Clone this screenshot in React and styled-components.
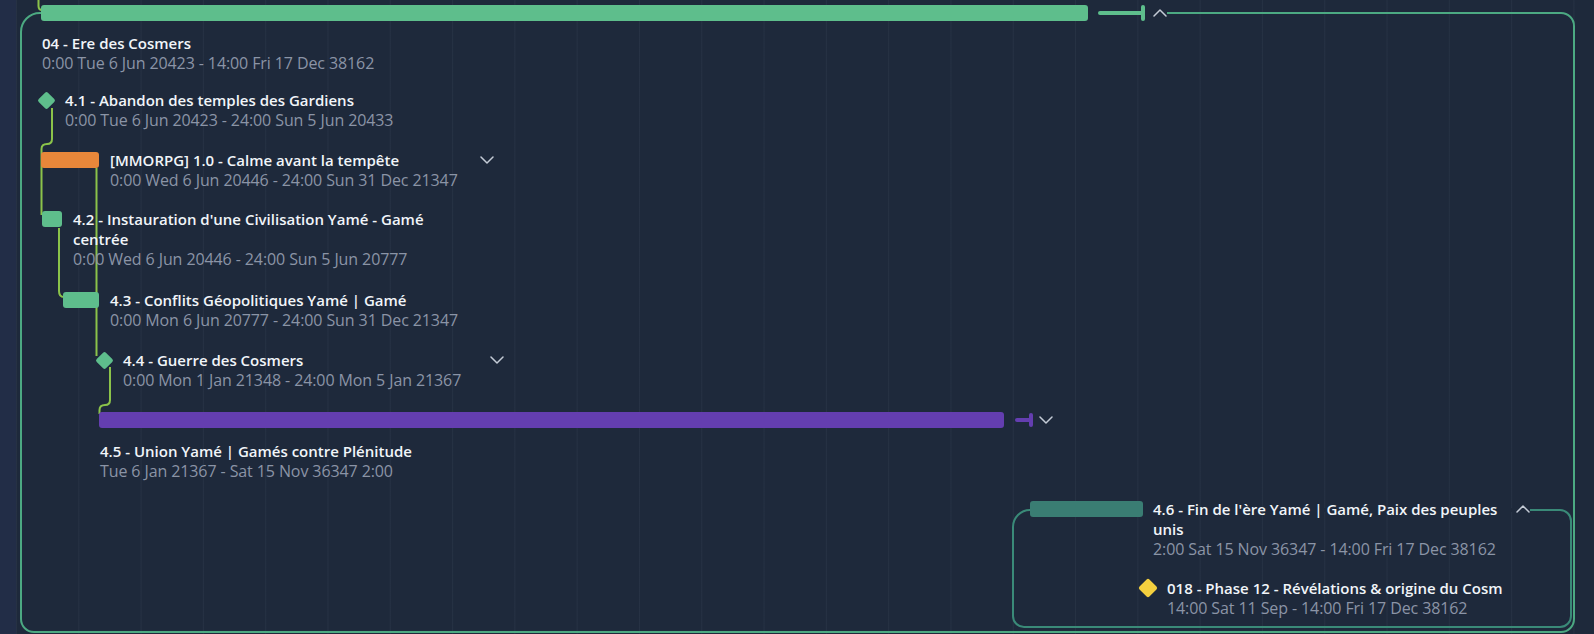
import React from "react";
import styled, { createGlobalStyle } from "styled-components";

const BG = "#1e293b";
const GREEN = "#5ebe8c";
const LIME = "#8bc34a";

const GlobalStyle = createGlobalStyle`
  html, body {
    margin: 0;
    padding: 0;
    background: ${BG};
  }
  body {
    font-family: "Open Sans", "Noto Sans", sans-serif;
    -webkit-font-smoothing: antialiased;
  }
`;

const Page = styled.div`
  position: relative;
  box-sizing: border-box;
  width: 1594px;
  height: 634px;
  overflow: hidden;
  padding-top: 12px;
  background-color: ${BG};
  background-image: linear-gradient(to right, rgba(148, 163, 184, 0.07) 1px, transparent 1px),
    linear-gradient(to right, #222d47 16px, transparent 16px);
  background-size: 62.3px 100%, 100% 100%;
  background-position: 16px 0, 0 0;
  background-repeat: repeat-x, no-repeat;
`;

const Links = styled.svg`
  position: absolute;
  left: 0;
  top: 0;
  pointer-events: none;
`;

const Group = styled.div`
  position: relative;
  box-sizing: border-box;
  width: ${(p) => p.$w}px;
  margin: ${(p) => p.$mt}px 0 ${(p) => p.$mb}px ${(p) => p.$ml}px;
  padding-bottom: ${(p) => p.$pb}px;
  border: 2px solid ${(p) => p.$color};
  border-radius: ${(p) => p.$r}px ${(p) => p.$r2}px ${(p) => p.$r2}px ${(p) => p.$r2}px;
`;

// header row of a group: sits on the group's top border and hides it up to the chevron
const Head = styled.div`
  position: relative;
  z-index: 0;
  display: flex;
  align-items: ${(p) => (p.$top ? "flex-start" : "center")};
  width: fit-content;
  margin: ${(p) => p.$mt}px 0 0 ${(p) => p.$ml}px;

  &::before {
    content: "";
    position: absolute;
    z-index: -1;
    left: 0;
    right: 0;
    top: ${(p) => p.$cut}px;
    height: 4px;
    background: ${BG};
  }
`;

const Row = styled.div`
  display: flex;
  align-items: ${(p) => (p.$center ? "center" : "flex-start")};
  margin: ${(p) => p.$mt}px 0 0 ${(p) => p.$ml}px;
`;

const Slot = styled.div`
  flex: none;
  display: flex;
  align-items: center;
  justify-content: center;
  width: ${(p) => (p.$w ? `${p.$w}px` : "auto")};
  height: 20px;
`;

const Bar = styled.div`
  flex: none;
  width: ${(p) => p.$w}px;
  height: 16px;
  border-radius: 3px;
  background: ${(p) => p.$color};
`;

const Diamond = styled.div`
  width: ${(p) => p.$size}px;
  height: ${(p) => p.$size}px;
  border-radius: 2px;
  transform: rotate(45deg);
  background: ${(p) => p.$color};
`;

const Deadline = styled.div`
  flex: none;
  display: flex;
  align-items: center;
  margin-left: ${(p) => p.$gap}px;

  &::before {
    content: "";
    width: ${(p) => p.$len}px;
    height: 4px;
    border-radius: 2px 0 0 2px;
    background: ${(p) => p.$color};
  }
  &::after {
    content: "";
    width: 4px;
    height: ${(p) => p.$cap}px;
    border-radius: 2px;
    background: ${(p) => p.$color};
  }
`;

const Label = styled.div`
  flex: none;
  display: flex;
  flex-direction: column;
  width: ${(p) => (p.$w ? `${p.$w}px` : "auto")};
  margin-left: ${(p) => p.$gap || 0}px;
`;

const Title = styled.div`
  font-size: 15px;
  line-height: 20px;
  font-weight: 600;
  color: #f1f5f9;
  white-space: ${(p) => (p.$single ? "nowrap" : "normal")};
`;

const When = styled.div`
  font-size: 16px;
  line-height: 20px;
  letter-spacing: -0.1px;
  color: #8b94a6;
  white-space: nowrap;
`;

const Caret = styled.svg`
  flex: none;
  display: block;
  margin-left: ${(p) => p.$gap}px;
`;

function Chevron({ up, gap }) {
  return (
    <Caret
      $gap={gap}
      width="14"
      height="20"
      viewBox="0 0 14 20"
      fill="none"
      stroke="#c4cbd6"
      strokeWidth="1.5"
      strokeLinecap="round"
      strokeLinejoin="round"
    >
      <path d={up ? "M1 13 L7 7 L13 13" : "M1 7 L7 13 L13 7"} />
    </Caret>
  );
}

function Text({ title, when, w, gap, single }) {
  return (
    <Label $w={w} $gap={gap}>
      <Title $single={single}>{title}</Title>
      <When>{when}</When>
    </Label>
  );
}

export default function App() {
  return (
    <>
      <GlobalStyle />
      <Page>
        <Links width="1594" height="634" fill="none" stroke={LIME} strokeWidth="2">
          <path d="M38.5 0 V6 Q38.5 10 42 10" />
          <path d="M52 108 V139 Q52 144 47 144 Q41.5 144 41.5 149 V215" />
          <path d="M96.5 168 V356" />
          <path d="M59 228 V291 Q59 297 64 297" />
          <path d="M110 367 V400 Q110 405 105 405 Q99.5 405 99.5 410 V414" />
        </Links>

        <Group $ml={20} $mt={0} $mb={0} $pb={0} $w={1555} $r={20} $r2={14} $color="#4ca982">
          <Head $mt={-11} $ml={19} $cut={8}>
            <Bar $w={1047} $color={GREEN} />
            <Deadline $gap={10} $len={43} $cap={16} $color={GREEN} />
            <Chevron up gap={8} />
          </Head>

          <Row $mt={10} $ml={20}>
            <Text title="04 - Ere des Cosmers" when="0:00 Tue 6 Jun 20423 - 14:00 Fri 17 Dec 38162" />
          </Row>

          <Row $mt={17} $ml={15}>
            <Slot $w={18}>
              <Diamond $size={13} $color={GREEN} />
            </Slot>
            <Text
              gap={10}
              title="4.1 - Abandon des temples des Gardiens"
              when="0:00 Tue 6 Jun 20423 - 24:00 Sun 5 Jun 20433"
            />
          </Row>

          <Row $mt={20} $ml={19}>
            <Slot>
              <Bar $w={58} $color="#e8873a" />
            </Slot>
            <Text
              gap={11}
              w={364}
              title="[MMORPG] 1.0 - Calme avant la tempête"
              when="0:00 Wed 6 Jun 20446 - 24:00 Sun 31 Dec 21347"
            />
            <Chevron gap={6} />
          </Row>

          <Row $mt={19} $ml={20}>
            <Slot>
              <Bar $w={20} $color={GREEN} />
            </Slot>
            <Text
              gap={11}
              w={364}
              title="4.2 - Instauration d'une Civilisation Yamé - Gamé centrée"
              when="0:00 Wed 6 Jun 20446 - 24:00 Sun 5 Jun 20777"
            />
          </Row>

          <Row $mt={21} $ml={41}>
            <Slot>
              <Bar $w={36} $color={GREEN} />
            </Slot>
            <Text
              gap={11}
              w={364}
              title="4.3 - Conflits Géopolitiques Yamé | Gamé"
              when="0:00 Mon 6 Jun 20777 - 24:00 Sun 31 Dec 21347"
            />
          </Row>

          <Row $mt={20} $ml={73}>
            <Slot $w={18}>
              <Diamond $size={13} $color={GREEN} />
            </Slot>
            <Text
              gap={10}
              w={364}
              title="4.4 - Guerre des Cosmers"
              when="0:00 Mon 1 Jan 21348 - 24:00 Mon 5 Jan 21367"
            />
            <Chevron gap={3} />
          </Row>

          <Row $mt={20} $ml={77} $center>
            <Bar $w={905} $color="#643eb0" />
            <Deadline $gap={11} $len={14} $cap={14} $color="#643eb0" />
            <Chevron gap={6} />
          </Row>

          <Row $mt={11} $ml={78}>
            <Text title="4.5 - Union Yamé | Gamés contre Plénitude" when="Tue 6 Jan 21367 - Sat 15 Nov 36347 2:00" />
          </Row>

          <Group $ml={990} $mt={28} $mb={3} $pb={8} $w={560} $r={18} $r2={12} $color="#3a8a78">
            <Head $mt={-12} $ml={16} $cut={9} $top>
              <Slot>
                <Bar $w={113} $color="#3a7d73" />
              </Slot>
              <Text
                gap={10}
                w={358}
                title="4.6 - Fin de l'ère Yamé | Gamé, Paix des peuples unis"
                when="2:00 Sat 15 Nov 36347 - 14:00 Fri 17 Dec 38162"
              />
              <Chevron up gap={5} />
            </Head>

            <Row $mt={19} $ml={124}>
              <Slot $w={20}>
                <Diamond $size={14} $color="#f4d03f" />
              </Slot>
              <Text
                gap={9}
                w={360}
                single
                title="018 - Phase 12 - Révélations & origine du Cosm"
                when="14:00 Sat 11 Sep - 14:00 Fri 17 Dec 38162"
              />
            </Row>
          </Group>
        </Group>
      </Page>
    </>
  );
}
